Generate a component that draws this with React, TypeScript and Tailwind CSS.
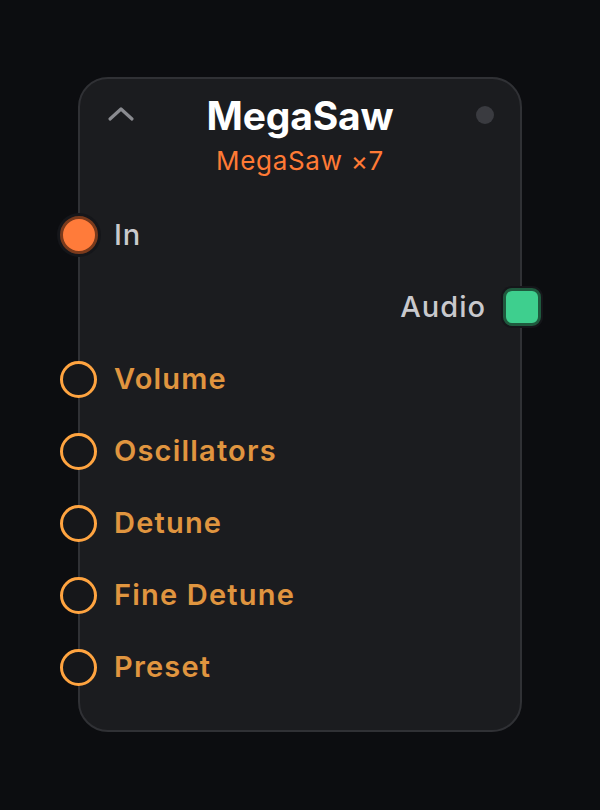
import React from 'react';

const params = ['Volume', 'Oscillators', 'Detune', 'Fine Detune', 'Preset'];

const font = { fontFamily: 'Inter, "Noto Sans", sans-serif' };

export default function App() {
  return (
    <div className="min-h-[810px] w-[600px] bg-[#0c0d10] pt-[77px] pl-[78px]" style={font}>
      <div className="w-[444px] h-[655px] rounded-[30px] border-2 border-[#303135] bg-[#1b1c1f] flex flex-col">
        {/* header */}
        <div className="relative h-[120px] flex flex-col items-center">
          <svg className="absolute left-[27px] top-[26px]" width="28" height="18" viewBox="0 0 28 18" fill="none">
            <path d="M3 14 L14 4 L25 14" stroke="#8a8b90" strokeWidth="3.2" strokeLinecap="round" strokeLinejoin="round" />
          </svg>
          <div className="absolute right-[26px] top-[27px] w-[18px] h-[18px] rounded-full bg-[#3a3b40]" />
          <div className="mt-[14px] text-[39px] leading-[46px] font-bold text-white tracking-[-0.2px]">MegaSaw</div>
          <div className="mt-[6px] text-[26px] leading-[32px] text-[#ff7a35] tracking-[0.7px]">MegaSaw ×7</div>
        </div>

        {/* input */}
        <div className="h-[72px] flex items-center -ml-[20px]">
          <div className="w-[38px] h-[38px] rounded-full bg-[#ff7b3a] border-[3px] border-[#7a3a1c] shadow-[0_0_0_3px_#15161a]" />
          <span className="ml-[16px] text-[29px] font-medium text-[#c9c9cd] tracking-[0.9px]">In</span>
        </div>

        {/* output */}
        <div className="h-[72px] flex items-center justify-end -mr-[21px]">
          <span className="mr-[17px] text-[29px] font-medium text-[#c9c9cd] tracking-[1px]">Audio</span>
          <div className="w-[38px] h-[38px] rounded-[9px] bg-[#3ecf8e] border-[3px] border-[#1f5a3e] shadow-[0_0_0_2px_#15161a]" />
        </div>

        {/* params */}
        {params.map((p) => (
          <div key={p} className="h-[72px] flex items-center -ml-[20px]">
            <div className="w-[37px] h-[37px] rounded-full border-[3.5px] border-[#ffa440] bg-[#16171a]" />
            <span className="ml-[17px] text-[29px] font-semibold text-[#e0953f] tracking-[1.2px]">{p}</span>
          </div>
        ))}
      </div>
    </div>
  );
}
